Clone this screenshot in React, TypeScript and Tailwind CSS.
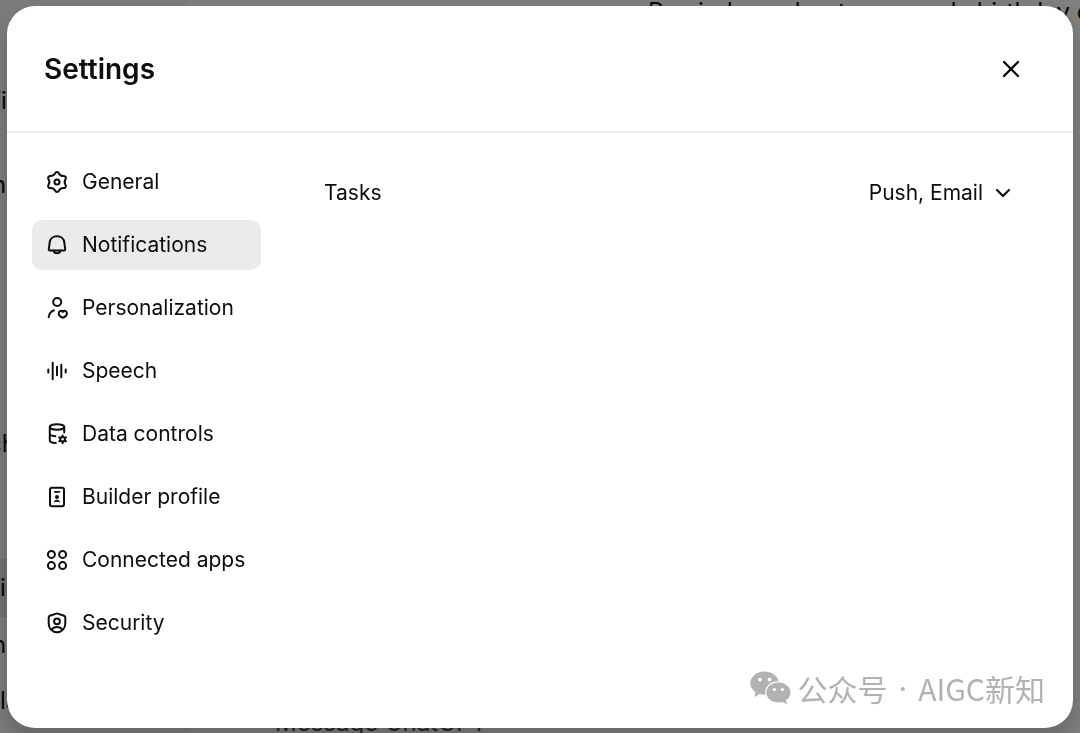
import type { ReactNode } from 'react';
import { ChevronDown, X } from 'lucide-react';

interface NavItem {
  label: string;
  icon: ReactNode;
}

const navItems: NavItem[] = [
  {
    label: 'General',
    icon: (
      <>
        <path d="M10.2 3.2A2 2 0 0 1 13.8 3.2Q15.1 6 18.7 6A2 2 0 0 1 20.5 9.2Q18.7 12 20.5 14.8A2 2 0 0 1 18.7 18Q15.1 18 13.8 20.8A2 2 0 0 1 10.2 20.8Q8.9 18 5.3 18A2 2 0 0 1 3.5 14.8Q5.3 12 3.5 9.2A2 2 0 0 1 5.3 6Q8.9 6 10.2 3.2Z" />
        <circle cx="12" cy="12" r="2.5" />
      </>
    ),
  },
  {
    label: 'Notifications',
    icon: (
      <>
        <path d="M12 3.2c-4 0-7 2.7-7.3 6.3L3.8 16.2a1 1 0 0 0 1 1.2h14.4a1 1 0 0 0 1-1.2l-.9-6.7C19 5.9 16 3.2 12 3.2Z" />
        <path d="M8.5 17.6a3.6 3.6 0 0 0 7 0" />
      </>
    ),
  },
  {
    label: 'Personalization',
    icon: (
      <>
        <circle cx="12.2" cy="6" r="4" />
        <path d="M3.7 21.2c.4-3.3 2.2-5.7 5.2-6.9" />
        <path d="M17.8 21.8c-2.6-1-4.1-2.6-4.1-4.5 0-2.6 2.8-3.2 4.1-1.4 1.3-1.8 4.1-1.2 4.1 1.4 0 1.9-1.5 3.5-4.1 4.5Z" />
      </>
    ),
  },
  {
    label: 'Speech',
    icon: <path d="M3.3 10.5v3M7.7 3.8v16.4M12 7.7v8.6M16.3 5.8v12.4M20.7 10.5v3" />,
  },
  {
    label: 'Data controls',
    icon: (
      <>
        <ellipse cx="12" cy="5" rx="7.2" ry="2.7" />
        <path d="M4.8 5v13.2c0 1.5 2.5 2.6 6 2.8M4.8 11.6c0 1.4 2.3 2.5 5.6 2.7M19.2 5v5.5" />
        <circle cx="17.6" cy="17.3" r="2.3" />
        <path d="M17.6 13.4v1.3M17.6 19.9v1.3M14.2 15.3l1.1.7M19.9 18.6l1.1.7M14.2 19.3l1.1-.7M19.9 16l1.1-.7" />
      </>
    ),
  },
  {
    label: 'Builder profile',
    icon: (
      <>
        <rect x="5" y="2.8" width="14" height="18.4" rx="2" />
        <path strokeWidth="1.7" d="M9.7 6.8h4.6" />
        <circle cx="12" cy="12" r="2" fill="currentColor" stroke="none" />
        <path d="M8.8 17.6c.3-1.7 1.5-2.8 3.2-2.8s2.9 1.1 3.2 2.8c-2-1-4.4-1-6.4 0Z" fill="currentColor" stroke="none" />
      </>
    ),
  },
  {
    label: 'Connected apps',
    icon: (
      <>
        <circle cx="6.4" cy="6.4" r="3.5" />
        <circle cx="17.6" cy="6.4" r="3.5" />
        <circle cx="6.4" cy="17.6" r="3.5" />
        <circle cx="17.6" cy="17.6" r="3.5" />
      </>
    ),
  },
  {
    label: 'Security',
    icon: (
      <>
        <path d="M11.3 2.6a2 2 0 0 1 1.4 0l6.3 2.1a2 2 0 0 1 1.3 1.9v6.2c0 4.8-3.8 8.5-8.3 8.5s-8.3-3.7-8.3-8.5V6.6A2 2 0 0 1 5 4.7Z" />
        <circle cx="12" cy="10.3" r="2.9" />
        <path d="M6.7 18.6c1.2-1.7 3-2.6 5.3-2.6s4.1.9 5.3 2.6" />
      </>
    ),
  },
];

function NavIcon({ children }: { children: ReactNode }) {
  return (
    <svg
      viewBox="0 0 24 24"
      className="size-6 shrink-0"
      fill="none"
      stroke="currentColor"
      strokeWidth="2"
      strokeLinecap="round"
      strokeLinejoin="round"
      aria-hidden="true"
    >
      {children}
    </svg>
  );
}

function WeChatLogo() {
  return (
    <svg viewBox="0 0 41 34" className="h-[34px] w-[41px]" aria-hidden="true">
      <path
        fill="#b2b2b2"
        d="M14.5.5C6.6.5.3 5.7.3 12.2c0 3.7 2 6.9 5.3 9.1L4.3 26l5.4-2.9c1.6.5 3.2.7 4.8.7h1.2A10 10 0 0 1 15.2 21c0-6 5.8-10.8 12.9-10.8h.6C27.3 4.6 21.5.5 14.5.5Z"
      />
      <path
        fill="#b2b2b2"
        d="M28.4 11.4c-6.7 0-12 4.4-12 10s5.3 10 12 10c1.4 0 2.7-.2 4-.5l4.6 2.4-1.2-4c2.9-1.9 4.7-4.7 4.7-7.9 0-5.6-5.4-10-12.1-10Z"
      />
      <circle cx="10" cy="8.6" r="1.9" fill="#fff" />
      <circle cx="19.5" cy="8.6" r="1.9" fill="#fff" />
      <circle cx="24.4" cy="18.5" r="1.6" fill="#fff" />
      <circle cx="32.4" cy="18.5" r="1.6" fill="#fff" />
    </svg>
  );
}

/* Chat page that stays visible around the edges of the dialog */
function ChatPage() {
  return (
    <div className="flex h-screen overflow-hidden bg-white text-2xl leading-7 text-[#0d0d0d]" aria-hidden="true">
      <div className="flex w-[187px] shrink-0 flex-col bg-[#f9f9f9] pt-[87px]">
        <p className="mb-14 -indent-2">fi</p>
        <p className="mb-[231px] -indent-2">n</p>
        <p className="mb-[101px] -indent-3">ch</p>
        <p className="bg-[#e3e3e3] py-[15px]">i</p>
        <p className="mt-[14px] -indent-2">n</p>
        <p className="mt-7">la</p>
      </div>
      <div className="flex min-w-0 grow flex-col justify-between">
        <p className="-mt-0.5 pl-[461px] whitespace-nowrap">Remind me about my mom's birthday on</p>
        <p className="-mb-1 pl-[88px] text-[#4a4a4a]">Message ChatGPT</p>
      </div>
    </div>
  );
}

export default function App() {
  return (
    <div className="font-[Inter,'Liberation_Sans',sans-serif]">
      <ChatPage />
      <div className="fixed inset-0 flex bg-black/50 px-[7px] pt-[6px] pb-[5px]">
        <div
          role="dialog"
          aria-labelledby="settings-title"
          className="flex grow flex-col rounded-[28px] bg-white text-[#0d0d0d] shadow-[0_12px_24px_rgba(0,0,0,0.2)]"
        >
          <header className="flex h-[127px] shrink-0 items-center justify-between border-b-2 border-[#ececec] pr-12 pl-[37px]">
            <h1 id="settings-title" className="text-[28px] leading-9 font-semibold">
              Settings
            </h1>
            <button type="button" aria-label="Close" className="text-black">
              <X className="size-7" strokeWidth={2} />
            </button>
          </header>

          <div className="flex grow pt-6 pl-[25px]">
            <nav className="flex w-[229px] shrink-0 flex-col gap-[13px]">
              {navItems.map((item) => (
                <button
                  key={item.label}
                  type="button"
                  className={`flex h-[50px] items-center gap-[13px] rounded-[10px] px-[13px] text-left text-[21px] leading-7 ${
                    item.label === 'Notifications' ? 'bg-[#ebebeb]' : ''
                  }`}
                >
                  <NavIcon>{item.icon}</NavIcon>
                  <span className="whitespace-nowrap">{item.label}</span>
                </button>
              ))}
            </nav>

            <main className="flex grow flex-col justify-between pl-[63px]">
              <div className="flex items-center justify-between pt-[22px] pr-[58px] text-[21px] leading-7">
                <label htmlFor="tasks">Tasks</label>
                <div className="relative flex items-center">
                  <select id="tasks" defaultValue="Push, Email" className="field-sizing-content appearance-none bg-transparent pr-8">
                    <option>Push, Email</option>
                  </select>
                  <ChevronDown className="pointer-events-none absolute right-0 size-6" strokeWidth={2.2} />
                </div>
              </div>

              <div className="flex items-center justify-end gap-[7px] pr-7 pb-5 font-['Noto_Sans_CJK_SC',sans-serif] text-[30px] leading-10 text-[#b2b2b2]">
                <WeChatLogo />
                <p className="flex gap-[11px] whitespace-nowrap">
                  <span>公众号</span>
                  <span className="font-[Inter]">·</span>
                  <span>AIGC新知</span>
                </p>
              </div>
            </main>
          </div>
        </div>
      </div>
    </div>
  );
}
